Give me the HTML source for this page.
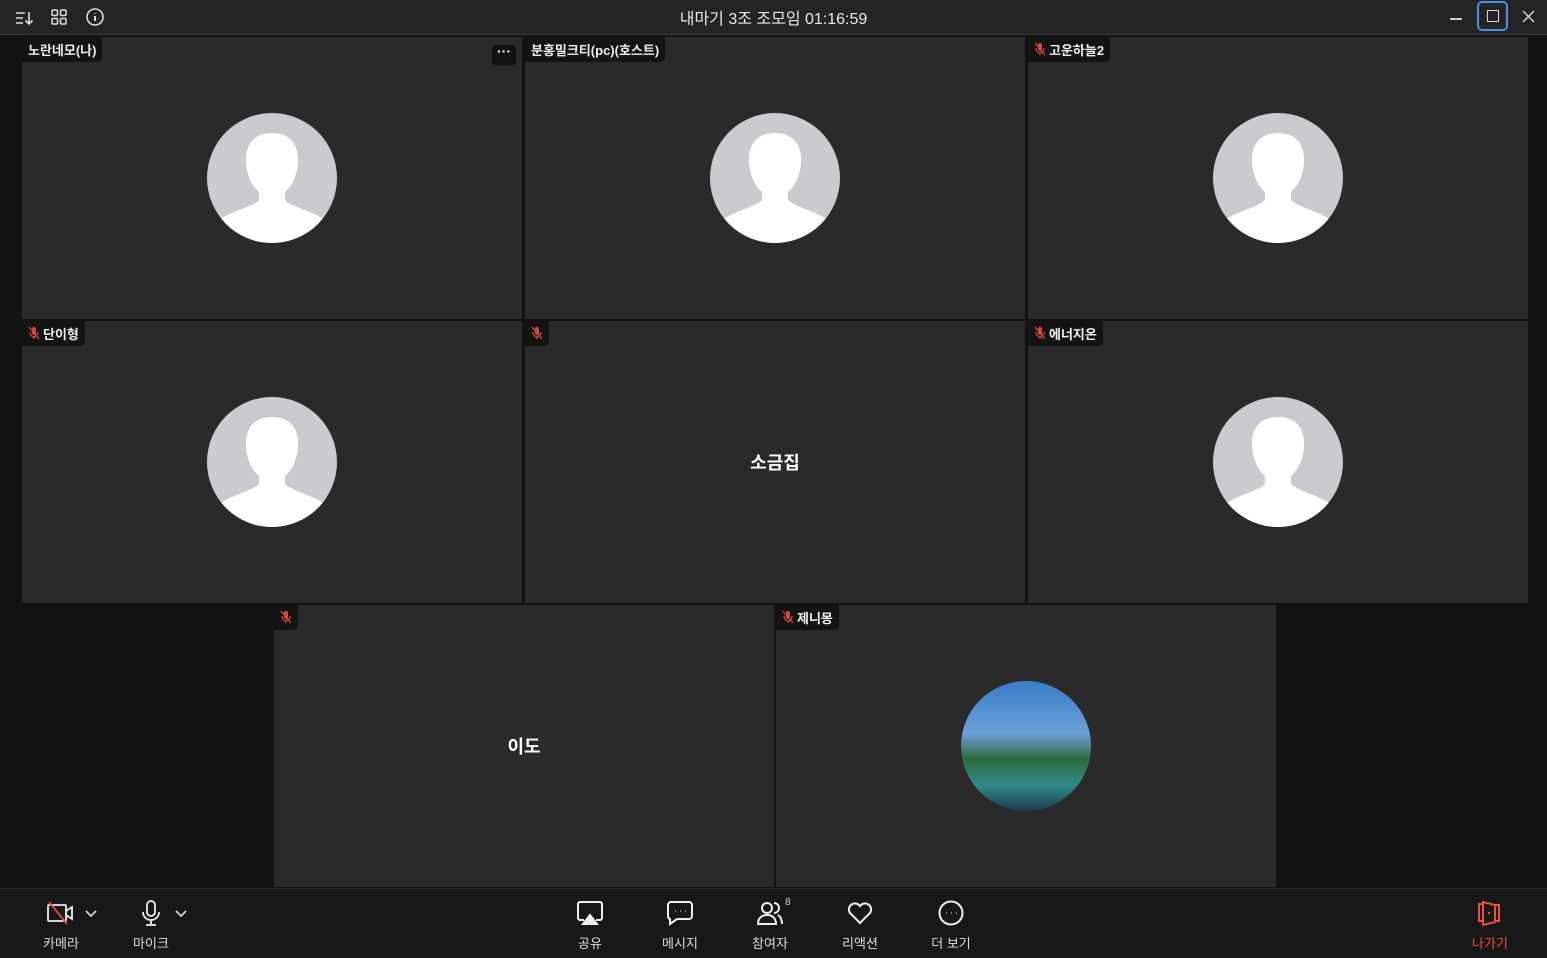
<!DOCTYPE html><html><head><meta charset="utf-8"><style>
*{margin:0;padding:0;box-sizing:border-box}
body{width:1547px;height:958px;background:#131313;font-family:"Liberation Sans","Noto Sans CJK KR",sans-serif;color:#fff;position:relative;overflow:hidden}
.top{position:absolute;left:0;top:0;width:1547px;height:35px;background:#242424;border-bottom:1px solid #3a3a3a}
.title{position:absolute;left:0;right:0;top:5px;text-align:center;font-size:16px;color:#e8e8e8}
.tile{position:absolute;width:500px;height:282px;background:#2a2a2a}
.lbl{position:absolute;left:0;top:0;height:25px;background:#141414;border-radius:0 0 5px 0;font-size:13px;font-weight:bold;padding:3px 6px 0 6px;color:#eee;display:flex;align-items:flex-start;gap:3px}
.av{position:absolute;left:185px;top:76px;width:130px;height:130px;border-radius:50%;background:#c9cbce;overflow:hidden}
.name{position:absolute;left:0;right:0;top:128px;text-align:center;font-size:18px;font-weight:bold}
.bot{position:absolute;left:0;top:888px;width:1547px;height:70px;background:#181818;border-top:1px solid #2a2a2a}
.btn{position:absolute;top:10px;width:60px;text-align:center;font-size:13px;color:#ddd}
.btn svg{display:block;margin:0 auto 6px}
</style></head><body>
<svg width="0" height="0" style="position:absolute"><defs>
<symbol id="p" viewBox="0 0 130 130"><path d="M65 20c-20 0-27 14-26 30 1 13 6 23 13 29v8c-8 8-32 12-42 22 14 16 34 23 55 23s41-7 55-23c-10-10-34-14-42-22v-8c7-6 12-16 13-29 1-16-6-30-26-30z" fill="#fff"/></symbol>
<symbol id="m" viewBox="0 0 12 14"><rect x="4" y="1" width="4" height="8" rx="2" fill="#d9473a"/><path d="M2 6c0 3 2 5 4 5s4-2 4-5M6 11v2M1 1l10 12" stroke="#d9473a" stroke-width="1.3" fill="none"/></symbol>
</defs></svg>
<div class="top">
<svg style="position:absolute;left:14px;top:9px" width="20" height="18" viewBox="0 0 20 18" fill="none" stroke="#ddd" stroke-width="1.6"><path d="M2 4h9M2 9h7M2 14h7M15 3v12M11.5 11.5L15 15l3.5-3.5"/></svg>
<svg style="position:absolute;left:50px;top:8px" width="18" height="18" viewBox="0 0 18 18" fill="none" stroke="#ddd" stroke-width="1.5"><rect x="2" y="2" width="5.5" height="5.5" rx="1"/><rect x="10.5" y="2" width="5.5" height="5.5" rx="1"/><rect x="2" y="10.5" width="5.5" height="5.5" rx="1"/><rect x="10.5" y="10.5" width="5.5" height="5.5" rx="1"/></svg>
<svg style="position:absolute;left:85px;top:7px" width="20" height="20" viewBox="0 0 20 20" fill="none" stroke="#ddd" stroke-width="1.6"><circle cx="10" cy="10" r="8"/><path d="M10 9v5M10 6v.5" stroke-width="2"/></svg>
<div class="title">내마기 3조 조모임 01:16:59</div>
<div style="position:absolute;left:1450px;top:18px;width:12px;height:1.5px;background:#ccc"></div>
<div style="position:absolute;left:1477px;top:1px;width:31px;height:30px;border:2px solid #4a8fe0;border-radius:5px"><div style="position:absolute;left:8px;top:7px;width:12px;height:12px;border:1.5px solid #ddd"></div></div>
<svg style="position:absolute;left:1522px;top:10px" width="13" height="13" viewBox="0 0 13 13" stroke="#ddd" stroke-width="1.4"><path d="M1 1l11 11M12 1L1 12"/></svg>
</div>

<div class="tile" style="left:22px;top:37px"><div class="lbl">노란네모(나)</div><div style="position:absolute;right:6px;top:8px;width:24px;height:20px;background:#111;border-radius:4px;color:#fff;font-size:14px;text-align:center;line-height:12px;font-weight:bold">···</div><div class="av"><svg width="130" height="130"><use href="#p"/></svg></div></div>
<div class="tile" style="left:525px;top:37px"><div class="lbl">분홍밀크티(pc)(호스트)</div><div class="av"><svg width="130" height="130"><use href="#p"/></svg></div></div>
<div class="tile" style="left:1028px;top:37px"><div class="lbl"><svg width="12" height="14" style="margin-top:2px"><use href="#m"/></svg>고운하늘2</div><div class="av"><svg width="130" height="130"><use href="#p"/></svg></div></div>

<div class="tile" style="left:22px;top:321px"><div class="lbl"><svg width="12" height="14" style="margin-top:2px"><use href="#m"/></svg>단이형</div><div class="av"><svg width="130" height="130"><use href="#p"/></svg></div></div>
<div class="tile" style="left:525px;top:321px"><div class="lbl"><svg width="12" height="14" style="margin-top:2px"><use href="#m"/></svg></div><div class="name">소금집</div></div>
<div class="tile" style="left:1028px;top:321px"><div class="lbl"><svg width="12" height="14" style="margin-top:2px"><use href="#m"/></svg>에너지온</div><div class="av"><svg width="130" height="130"><use href="#p"/></svg></div></div>

<div class="tile" style="left:274px;top:605px"><div class="lbl"><svg width="12" height="14" style="margin-top:2px"><use href="#m"/></svg></div><div class="name">이도</div></div>
<div class="tile" style="left:776px;top:605px"><div class="lbl"><svg width="12" height="14" style="margin-top:2px"><use href="#m"/></svg>제니몽</div><div class="av" style="background:linear-gradient(180deg,#3a7cc8 0%,#6aa0d8 40%,#2d6a3a 60%,#2f8a8a 80%,#1b3a4a 100%)"></div></div>

<div class="bot">
<div class="btn" style="left:31px"><svg width="30" height="28" viewBox="0 0 30 26" fill="none" stroke="#eee" stroke-width="1.8"><rect x="2" y="5" width="18" height="16" rx="1"/><path d="M20 11l6-4v12l-6-4"/><path d="M3 2l18 22" stroke="#e04a3a"/></svg>카메라</div>
<svg style="position:absolute;left:85px;top:21px" width="12" height="8" viewBox="0 0 12 8" fill="none" stroke="#ddd" stroke-width="1.6"><path d="M1 1l5 5 5-5"/></svg>
<div class="btn" style="left:121px"><svg width="30" height="28" viewBox="0 0 30 26" fill="none" stroke="#eee" stroke-width="1.8"><rect x="11" y="1" width="8" height="15" rx="4"/><path d="M7 12c0 5 4 8 8 8s8-3 8-8M15 20v5M10 25h10"/></svg>마이크</div>
<svg style="position:absolute;left:175px;top:21px" width="12" height="8" viewBox="0 0 12 8" fill="none" stroke="#ddd" stroke-width="1.6"><path d="M1 1l5 5 5-5"/></svg>
<div class="btn" style="left:560px"><svg width="30" height="28" viewBox="0 0 30 26" fill="none" stroke="#eee" stroke-width="2"><path d="M9 20H5a2 2 0 01-2-2V4a2 2 0 012-2h20a2 2 0 012 2v14a2 2 0 01-2 2h-4"/><path d="M15 15l-7 9h14z" fill="#eee"/></svg>공유</div>
<div class="btn" style="left:650px"><svg width="30" height="28" viewBox="0 0 30 26" fill="none" stroke="#eee" stroke-width="2"><path d="M6 2h18a3 3 0 013 3v11a3 3 0 01-3 3H12l-7 5v-5a3 3 0 01-2-3V5a3 3 0 013-3z"/><path d="M10 11h.5M15 11h.5M20 11h.5" stroke-width="2.2"/></svg>메시지</div>
<div class="btn" style="left:740px"><svg width="30" height="28" viewBox="0 0 30 26" fill="none" stroke="#eee" stroke-width="2"><circle cx="12" cy="8" r="5"/><path d="M3 24c0-6 4-9 9-9s9 3 9 9zM19 3a5 5 0 010 10M23 15c3 2 4 5 4 9"/></svg>참여자</div>
<div style="position:absolute;left:785px;top:8px;font-size:10px;color:#ccc">8</div>
<div class="btn" style="left:830px"><svg width="30" height="28" viewBox="0 0 30 26" fill="none" stroke="#eee" stroke-width="2"><path d="M15 23L5 13a6 6 0 0110-7 6 6 0 0110 7z"/></svg>리액션</div>
<div class="btn" style="left:921px"><svg width="30" height="28" viewBox="0 0 30 26" fill="none" stroke="#eee" stroke-width="2"><circle cx="15" cy="13" r="11.5"/><path d="M10 13h.5M15 13h.5M20 13h.5" stroke-width="2.2"/></svg>더 보기</div>
<div class="btn" style="left:1460px;color:#e8503f"><svg width="30" height="28" viewBox="0 0 30 26" fill="none" stroke="#e8503f" stroke-width="2"><path d="M8 4H4v17h4M8 2l12 3v17l-12 3z"/><path d="M20 5h4v16h-4M14 12v2"/></svg>나가기</div>
</div>
</body></html>
